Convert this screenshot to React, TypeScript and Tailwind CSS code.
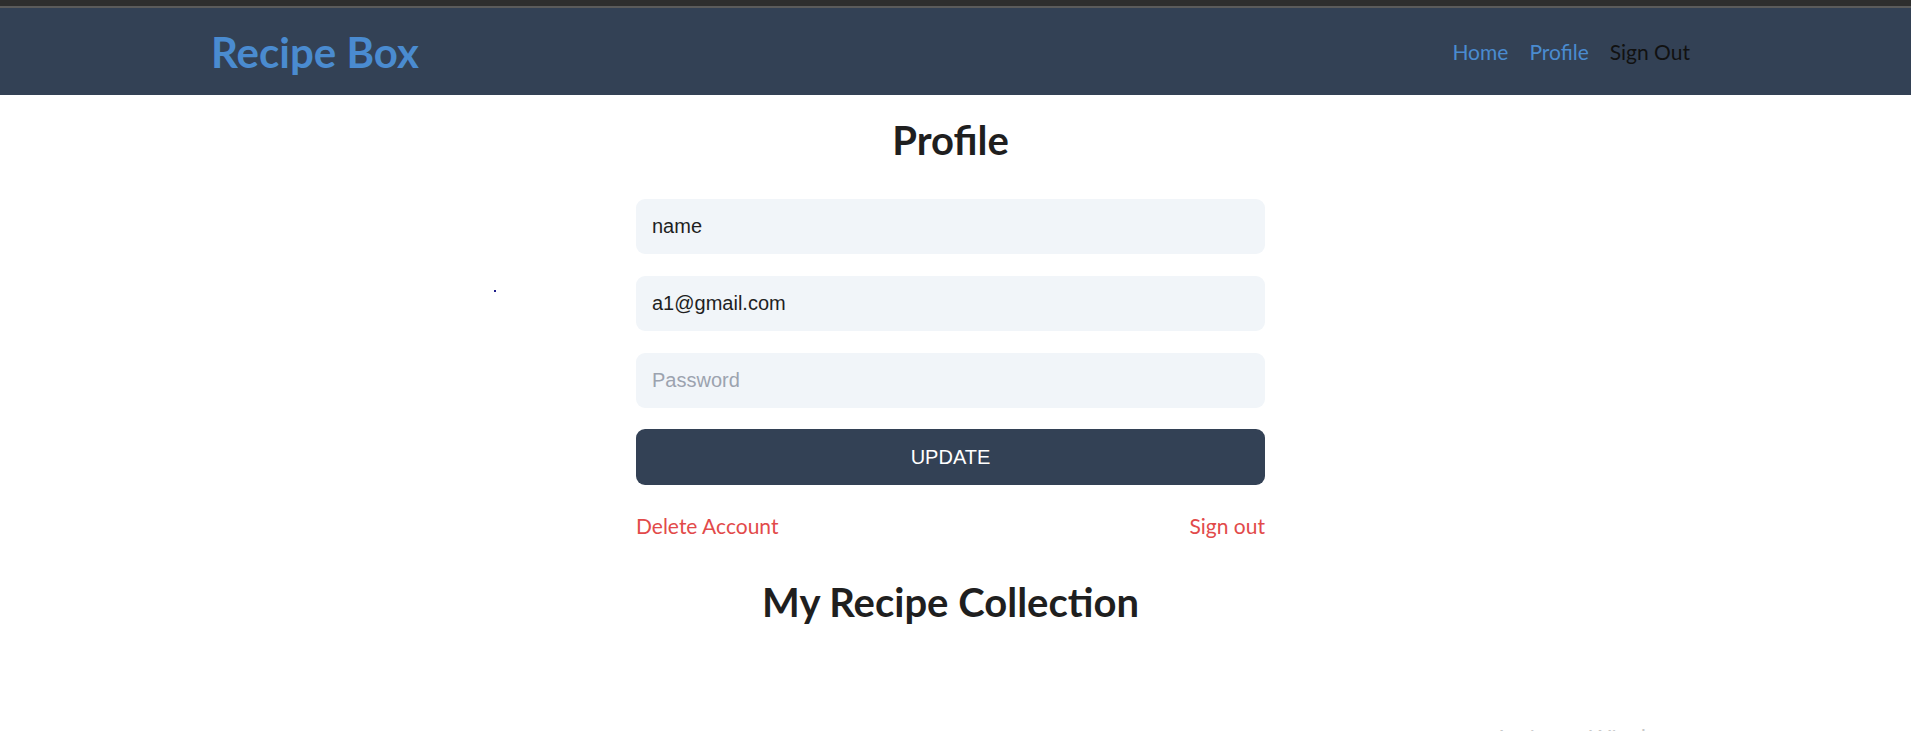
import React from 'react';

const lato = { fontFamily: 'Lato, "Noto Sans", sans-serif' };

export default function App() {
  return (
    <div className="relative min-h-[731px] bg-white overflow-hidden" style={lato}>
      {/* window chrome strip */}
      <div className="h-[6px] bg-[#2e2e2e]" />
      <div className="h-[2px] bg-[#5b5b5b]" />

      {/* Header */}
      <header className="bg-[#334155]">
        <div className="w-[1901px] h-[87px] px-[211px] flex items-center justify-between">
          <a className="text-[42px] font-bold text-[#4a8bd0] leading-none font-['Lato']">Recipe Box</a>
          <nav className="flex items-center gap-[21px] text-[21px] font-['Lato']">
            <a className="text-[#4a8bd0]">Home</a>
            <a className="text-[#4a8bd0]">Profile</a>
            <a className="text-[#111111]">Sign Out</a>
          </nav>
        </div>
      </header>

      {/* Profile */}
      <main className="w-[1901px] flex flex-col items-center">
        <h1 className="mt-[25px] text-[40px] font-bold text-[#1f1f1f] leading-none font-['Lato']">Profile</h1>

        <form className="mt-[39px] w-[629px] flex flex-col gap-[22px]" style={{ fontFamily: '"Liberation Sans", Arial, sans-serif' }}>
          <input
            defaultValue="name"
            className="h-[55px] rounded-[9px] bg-[#f1f5f9] px-[16px] text-[20px] text-[#1f1f1f] outline-none"
          />
          <input
            defaultValue="a1@gmail.com"
            className="h-[55px] rounded-[9px] bg-[#f1f5f9] px-[16px] text-[20px] text-[#1f1f1f] outline-none"
          />
          <input
            type="password"
            placeholder="Password"
            className="h-[55px] rounded-[9px] bg-[#f1f5f9] px-[16px] text-[20px] text-[#1f1f1f] placeholder:text-[#9ca3af] outline-none"
          />
          <button type="button" className="h-[56px] -mt-[1px] rounded-[9px] bg-[#334155] text-white text-[20px] uppercase">
            Update
          </button>
        </form>

        <div className="mt-[30px] w-[629px] flex justify-between text-[21px] text-[#e24a4a] leading-none font-['Lato']">
          <span>Delete Account</span>
          <span>Sign out</span>
        </div>

        <h2 className="mt-[46px] text-[40px] font-bold text-[#1f1f1f] leading-none font-['Lato']">My Recipe Collection</h2>
      </main>

      {/* stray dot */}
      <div className="absolute left-[494px] top-[290px] w-[2px] h-[2px] bg-[#1e1e8c]" />

      {/* OS watermark */}
      <div
        className="absolute left-[1494px] top-[722px] text-[24px] leading-[32px] text-[#c8c8c8] whitespace-nowrap"
        style={{ fontFamily: '"Open Sans", sans-serif' }}
      >
        Activate Windows
      </div>
    </div>
  );
}
